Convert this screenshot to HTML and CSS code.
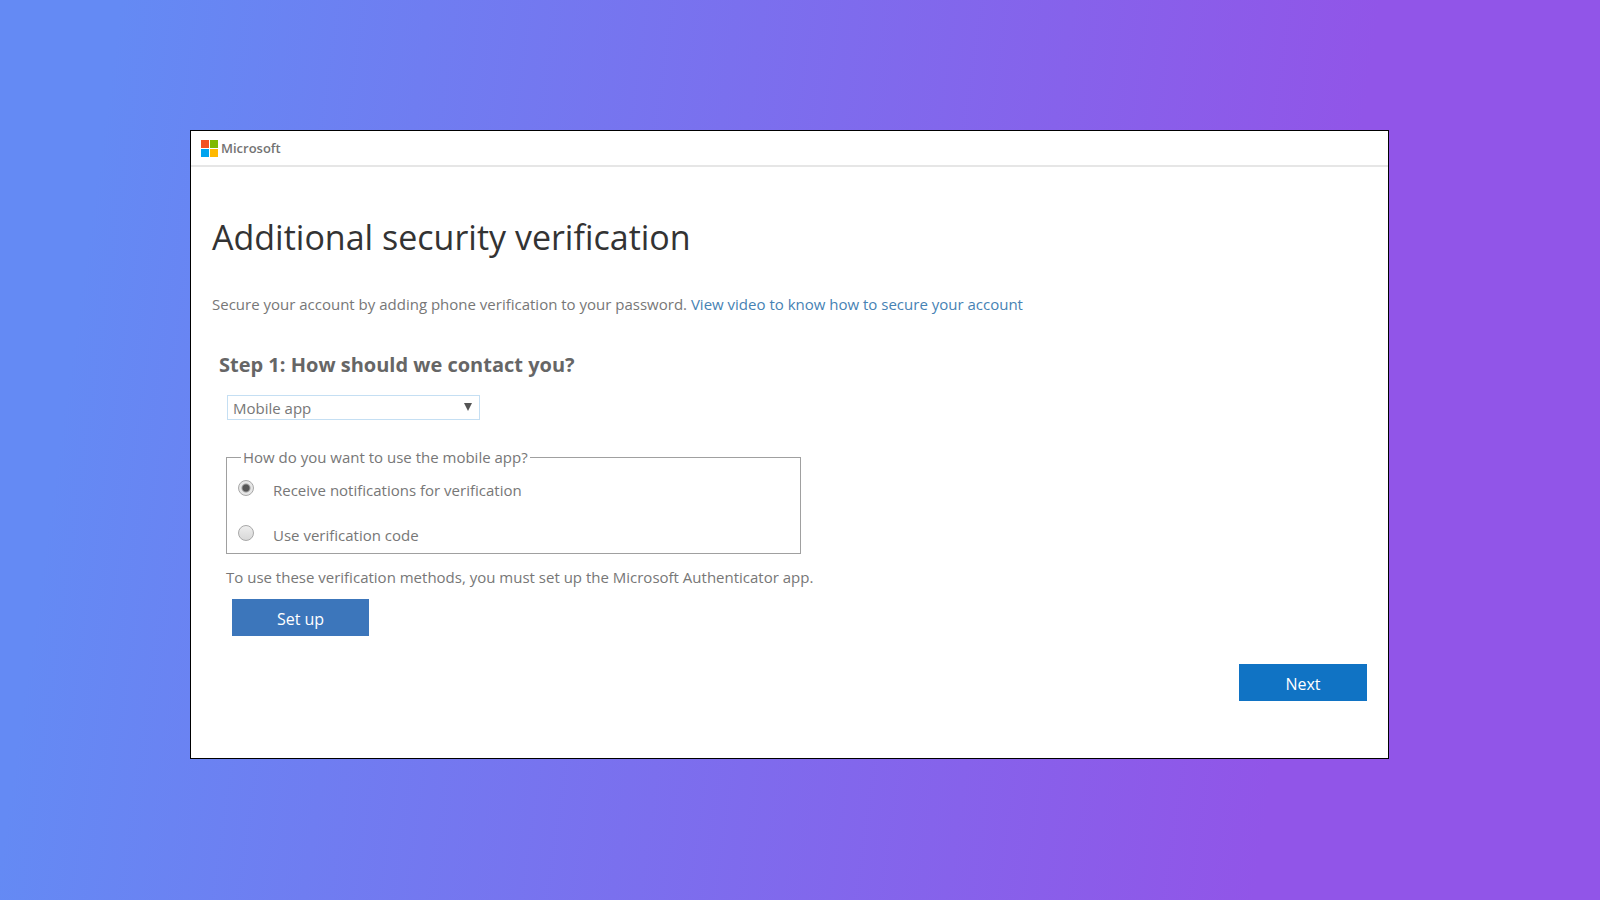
FILE: index.html
```html
<!DOCTYPE html>
<html lang="en">
<head>
  <meta charset="UTF-8" />
  <title>Additional security verification</title>
  <link rel="stylesheet" href="styles.css">
</head>
<body>
  <div class="container">
    <header class="header">
      <svg class="logo" width="17" height="17" viewBox="0 0 17 17" aria-hidden="true">
        <rect x="0" y="0" width="8" height="8" fill="#f25022" />
        <rect x="9" y="0" width="8" height="8" fill="#7fba00" />
        <rect x="0" y="9" width="8" height="8" fill="#00a4ef" />
        <rect x="9" y="9" width="8" height="8" fill="#ffb900" />
      </svg>
      <span class="brand">Microsoft</span>
    </header>

    <main class="content">
      <h1>Additional security verification</h1>
      <p class="intro">Secure your account by adding phone verification to your password. <a href="#">View video to know how to secure your account</a></p>

      <form id="formContact">
        <h2><label for="method">Step 1: How should we contact you?</label></h2>

        <div class="step">
          <div class="select-box">
            <select id="method">
              <option>Mobile app</option>
              <option>Authentication phone</option>
              <option>Office phone</option>
            </select>
            <svg class="arrow" width="8" height="8" viewBox="0 0 8 8" aria-hidden="true">
              <path d="M0 0h8L4 8z" fill="#555" />
            </svg>
          </div>

          <fieldset>
            <legend>How do you want to use the mobile app?</legend>
            <div class="option">
              <input type="radio" id="notifications" name="usage" checked />
              <label for="notifications">Receive notifications for verification</label>
            </div>
            <div class="option">
              <input type="radio" id="code" name="usage" />
              <label for="code">Use verification code</label>
            </div>
          </fieldset>

          <p class="note">To use these verification methods, you must set up the Microsoft Authenticator app.</p>
          <button type="button" class="btn setup">Set up</button>
        </div>

        <div class="actions">
          <button type="submit" class="btn next">Next</button>
        </div>
      </form>
    </main>
  </div>
</body>
</html>
```
FILE: styles.css
```css
* {
  box-sizing: border-box;
}

body {
  margin: 0;
  min-height: 100vh;
  padding: 130px 211px 130px 190px;
  font-family: "Open Sans", "Noto Sans", sans-serif;
  font-size: 15px;
  line-height: 20px;
  color: #777;
  background: linear-gradient(98deg, #648af4 7%, #9155e8 80%);
}

.container {
  background: #fff;
  border: 1px solid #000;
}

.header {
  display: flex;
  align-items: center;
  gap: 3px;
  height: 36px;
  padding: 0 10px;
  border-bottom: 2px solid #e6e6e6;
}

.brand {
  font-size: 13px;
  font-weight: 600;
  color: #737373;
}

.content {
  padding: 46px 21px 57px;
}

h1 {
  margin: 0;
  font-size: 34px;
  font-weight: 400;
  line-height: 48px;
  color: #333;
}

.intro {
  margin: 33px 0 0;
}

.intro a {
  color: #4682b4;
  text-decoration: none;
}

h2 {
  margin: 38px 0 0 7px;
  font-size: 20px;
  line-height: 26px;
  color: #666;
}

.step {
  width: 575px;
  margin: 17px 0 0 14px;
}

.select-box {
  position: relative;
  width: 253px;
  margin-left: 1px;
}

select {
  display: block;
  width: 100%;
  height: 25px;
  padding: 0 5px;
  appearance: none;
  font-family: inherit;
  font-size: 15px;
  color: #777;
  background: #fff;
  border: 1px solid #c5dff3;
  border-radius: 0;
}

.arrow {
  position: absolute;
  top: 8px;
  right: 8px;
  pointer-events: none;
}

fieldset {
  margin: 27px 0 0;
  padding: 13px 11px 8px;
  border: 1px solid #a0a0a0;
}

legend {
  margin-left: 3px;
  padding: 0 2px;
}

.option {
  display: flex;
  align-items: flex-start;
  gap: 19px;
}

.option + .option {
  margin-top: 25px;
}

input[type="radio"] {
  appearance: none;
  width: 16px;
  height: 16px;
  margin: 0;
  border: 1px solid #a8a8a8;
  border-radius: 50%;
  background: linear-gradient(#eee, #d8d8d8);
}

input[type="radio"]:checked {
  background: radial-gradient(circle, #555 3px, #e6e6e6 5px);
}

.note {
  margin: 13px 0 0;
  white-space: nowrap;
}

.btn {
  height: 37px;
  padding: 2px 6px 0;
  border: none;
  font-family: inherit;
  font-size: 16px;
  color: #fff;
  cursor: pointer;
}

.setup {
  display: block;
  width: 137px;
  margin: 12px 0 0 6px;
  background: #3c76bb;
}

.actions {
  display: flex;
  justify-content: flex-end;
  margin-top: 28px;
}

.next {
  width: 128px;
  background: #1073c4;
}
```
